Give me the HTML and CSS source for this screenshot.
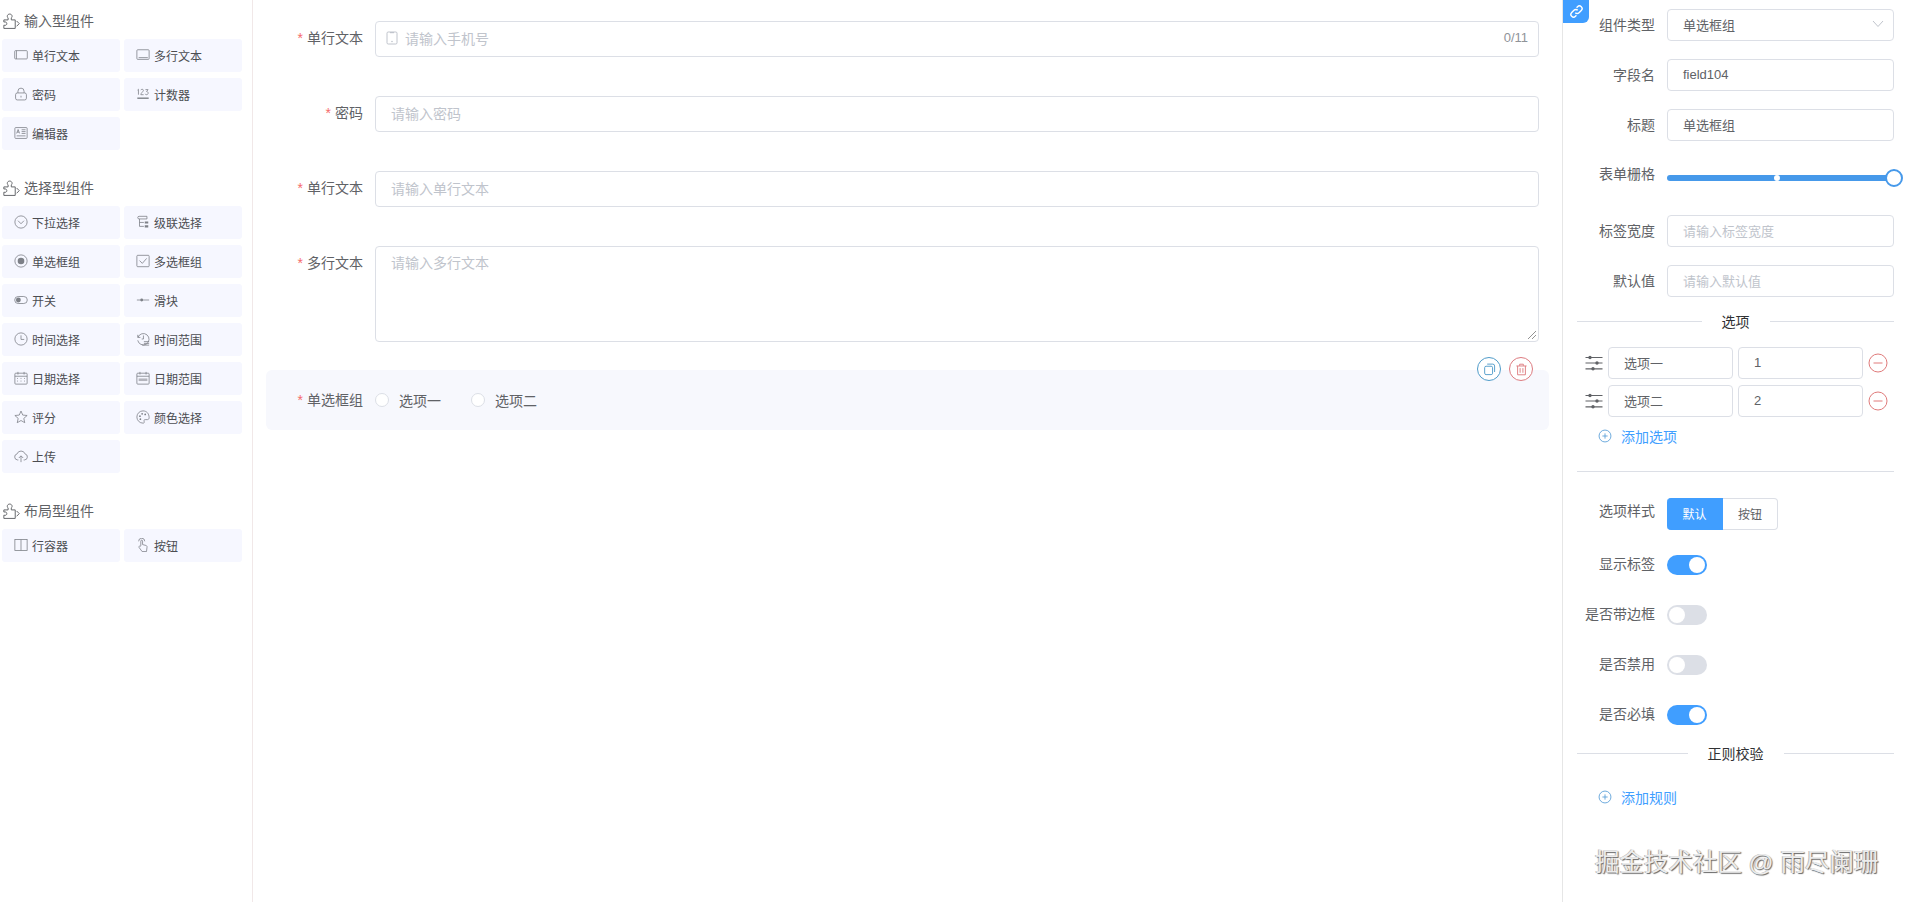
FILE: index.html
```html
<!DOCTYPE html>
<html lang="zh-CN">
<head>
<meta charset="utf-8">
<title>表单设计器</title>
<link rel="stylesheet" href="styles.css">
</head>
<body>
<svg class="defs" width="0" height="0" aria-hidden="true">
  <defs>
    <symbol id="puzzle" viewBox="0 0 16 16"><path d="M.8 6.500H4.800V4.600C3.500 3.900 3.800 1 6.300 1S9.100 3.900 7.800 4.600V6.500h3.700v8H.8v-3C2.800 12 3.600 11 3.600 10S2.800 8 .8 8.500z"/><path d="M12.800 7.500l2.500 2.500-2.500 2.500"/></symbol>
    <symbol id="rect" viewBox="0 0 16 16"><rect x=".8" y="3" width="14.400" height="9.500" rx="1"/><path d="M2.800 3v9.500"/></symbol>
    <symbol id="area" viewBox="0 0 16 16"><rect x="1" y="2" width="14" height="11" rx="1"/><path d="M3 11h10.500"/></symbol>
    <symbol id="lock" viewBox="0 0 16 16"><rect x="1.800" y="6.800" width="12.400" height="8" rx="2"/><path d="M4.500 6.800V4.800a3.500 3.500 0 0 1 7 0v2M8 10v2"/></symbol>
    <symbol id="count" viewBox="0 0 16 16"><path d="M1.500 12.800h13" stroke-width="1.600"/><path d="M1.800 3.500l1-.9v6.200M5.500 3.600c.4-1.500 3-1.200 3 .2 0 1.300-3 3-3 5h3.200M10.800 3h3l-1.700 2.200c2.400 0 2.400 3.600-.1 3.600-.8 0-1.400-.4-1.500-1"/></symbol>
    <symbol id="editor" viewBox="0 0 16 16"><rect x="1" y="1.800" width="14" height="12.400" rx="1"/><path d="M3 8.500l1.700-4.500 1.700 4.500M3.600 7h2.200M8.700 4.300h4.500M8.700 6.400h4.500M8.700 8.500h4.500M3 11.300h10.200"/></symbol>
    <symbol id="down" viewBox="0 0 16 16"><circle cx="8" cy="8" r="7"/><path d="M4.600 6.500L8 10l3.400-3.500"/></symbol>
    <symbol id="cascade" viewBox="0 0 16 16"><path d="M3.500 1.500h9v3h-9a1.500 1.500 0 0 1 0-3zM4 4.500v8.500h5M4 8.500h5"/><path d="M10 7.300h4v2.400h-4zM10 11.800h4v2.400h-4z" fill="currentColor" stroke="none"/></symbol>
    <symbol id="radio" viewBox="0 0 16 16"><circle cx="8" cy="8" r="7"/><circle cx="8" cy="8" r="3.800" fill="currentColor" stroke="none"/></symbol>
    <symbol id="check" viewBox="0 0 16 16"><rect x="1" y="1.500" width="14" height="13" rx="1"/><path d="M4 7.500l3.200 3.200L12.200 5"/></symbol>
    <symbol id="switch" viewBox="0 0 16 16"><rect x=".8" y="4" width="14.400" height="8" rx="4"/><circle cx="5" cy="8" r="2.800" fill="currentColor" stroke="none"/></symbol>
    <symbol id="slider" viewBox="0 0 16 16"><path d="M1 8h14"/><circle cx="6.500" cy="8" r="1.600" fill="currentColor" stroke="none"/></symbol>
    <symbol id="clock" viewBox="0 0 16 16"><circle cx="8" cy="8" r="7"/><path d="M8 3.800V8.500h3.700"/></symbol>
    <symbol id="clock2" viewBox="0 0 16 16"><path d="M2 3.200v3h3M2.300 6A6.500 6.500 0 1 1 2 9.500"/><path d="M8.500 4v4h-2M9 11h6M9 13h6M7 15h8"/></symbol>
    <symbol id="cal" viewBox="0 0 16 16"><rect x="1" y="2.500" width="14" height="12.500" rx="1"/><path d="M1 6h14M4.500 1v3M11.500 1v3"/><path d="M3.500 8.500h1M7.500 8.500h1M11.500 8.500h1M3.500 11.500h1M7.500 11.500h1M11.500 11.500h1"/></symbol>
    <symbol id="cal2" viewBox="0 0 16 16"><rect x="1" y="2.500" width="14" height="12.500" rx="1"/><path d="M1 6h14M4.500 1v3M11.500 1v3"/><path d="M3 8.500h10v3H3z" fill="currentColor" stroke="none" opacity=".55"/></symbol>
    <symbol id="star" viewBox="0 0 16 16"><path d="M8 1.200l2 4.600 5 .5-3.800 3.300 1.100 4.900L8 12l-4.300 2.500 1.100-4.900L1 6.300l5-.5z"/></symbol>
    <symbol id="palette" viewBox="0 0 16 16"><path d="M8 1a7 7 0 1 0 0 14c1.500 0 1.800-1 1.300-1.900-.6-1 0-2.100 1.200-2.100H13c1.300 0 2-.9 2-2.200C15 4 12 1 8 1z"/><circle cx="4.500" cy="7" r="1" fill="currentColor" stroke="none"/><circle cx="7" cy="4.300" r="1" fill="currentColor" stroke="none"/><circle cx="10.500" cy="5" r="1" fill="currentColor" stroke="none"/><circle cx="5" cy="10.500" r="1" fill="currentColor" stroke="none"/></symbol>
    <symbol id="upload" viewBox="0 0 16 16"><path d="M5 12.500H4A3.500 3.500 0 0 1 3.500 5.600 4.800 4.800 0 0 1 12.600 5.600 3.500 3.500 0 0 1 12 12.500h-1"/><path d="M8 15V8M5.500 10.300L8 7.800l2.500 2.500"/></symbol>
    <symbol id="cols" viewBox="0 0 16 16"><rect x="1" y="1.800" width="14" height="12.400"/><path d="M8 1.800v12.400"/></symbol>
    <symbol id="hand" viewBox="0 0 16 16"><path d="M5.500 9V3.500c0-1.400 2-1.400 2 0v4l3.800 1c1 .3 1.500 1 1.300 2l-.6 5H7L3.500 10.800c-.7-.9.500-2.100 1.300-1.300z"/><path d="M3 3.800a3.500 3.500 0 0 1 7 0"/></symbol>
    <symbol id="plus" viewBox="0 0 16 16"><circle cx="8" cy="8" r="6.800"/><path d="M8 5v6M5 8h6"/></symbol>
    <symbol id="drag" viewBox="0 0 18 16"><path d="M.5 2.500h17M.5 8h17M.5 13.800h17"/><circle cx="5" cy="2.500" r="1.700" fill="currentColor" stroke="none"/><circle cx="12" cy="8" r="1.700" fill="currentColor" stroke="none"/><circle cx="8" cy="13.800" r="1.700" fill="currentColor" stroke="none"/></symbol>
  </defs>
</svg>

<div class="app">
  <aside class="left">
    <section class="group">
      <h3 class="group-title"><svg class="ic-title"><use href="#puzzle"/></svg>输入型组件</h3>
      <div class="items">
        <div class="item"><svg class="ic"><use href="#rect"/></svg>单行文本</div>
        <div class="item"><svg class="ic"><use href="#area"/></svg>多行文本</div>
        <div class="item"><svg class="ic"><use href="#lock"/></svg>密码</div>
        <div class="item"><svg class="ic"><use href="#count"/></svg>计数器</div>
        <div class="item"><svg class="ic"><use href="#editor"/></svg>编辑器</div>
      </div>
    </section>
    <section class="group">
      <h3 class="group-title"><svg class="ic-title"><use href="#puzzle"/></svg>选择型组件</h3>
      <div class="items">
        <div class="item"><svg class="ic"><use href="#down"/></svg>下拉选择</div>
        <div class="item"><svg class="ic"><use href="#cascade"/></svg>级联选择</div>
        <div class="item"><svg class="ic"><use href="#radio"/></svg>单选框组</div>
        <div class="item"><svg class="ic"><use href="#check"/></svg>多选框组</div>
        <div class="item"><svg class="ic"><use href="#switch"/></svg>开关</div>
        <div class="item"><svg class="ic"><use href="#slider"/></svg>滑块</div>
        <div class="item"><svg class="ic"><use href="#clock"/></svg>时间选择</div>
        <div class="item"><svg class="ic"><use href="#clock2"/></svg>时间范围</div>
        <div class="item"><svg class="ic"><use href="#cal"/></svg>日期选择</div>
        <div class="item"><svg class="ic"><use href="#cal2"/></svg>日期范围</div>
        <div class="item"><svg class="ic"><use href="#star"/></svg>评分</div>
        <div class="item"><svg class="ic"><use href="#palette"/></svg>颜色选择</div>
        <div class="item"><svg class="ic"><use href="#upload"/></svg>上传</div>
      </div>
    </section>
    <section class="group">
      <h3 class="group-title"><svg class="ic-title"><use href="#puzzle"/></svg>布局型组件</h3>
      <div class="items">
        <div class="item"><svg class="ic"><use href="#cols"/></svg>行容器</div>
        <div class="item"><svg class="ic"><use href="#hand"/></svg>按钮</div>
      </div>
    </section>
  </aside>

  <main class="center">
    <div class="row">
      <label class="row-label"><span class="req">*</span>单行文本</label>
      <div class="field">
        <svg class="phone" viewBox="0 0 12 14"><rect x="1" y="1" width="10" height="12" rx="1.200"/><path d="M4 1h4v1.200H4z" fill="currentColor" stroke="none"/><circle cx="6" cy="10.500" r=".8" fill="currentColor" stroke="none"/></svg>
        <span class="ph grow">请输入手机号</span>
        <span class="count">0/11</span>
      </div>
    </div>
    <div class="row">
      <label class="row-label"><span class="req">*</span>密码</label>
      <div class="field pad"><span class="ph">请输入密码</span></div>
    </div>
    <div class="row">
      <label class="row-label"><span class="req">*</span>单行文本</label>
      <div class="field pad"><span class="ph">请输入单行文本</span></div>
    </div>
    <div class="row row-area">
      <label class="row-label"><span class="req">*</span>多行文本</label>
      <div class="field pad area">
        <span class="ph">请输入多行文本</span>
        <svg class="grip" viewBox="0 0 10 10"><path d="M1 9l8-8M5 9l4-4"/></svg>
      </div>
    </div>
    <div class="row row-active">
      <label class="row-label"><span class="req">*</span>单选框组</label>
      <div class="radios">
        <span class="radio"><i class="dot"></i>选项一</span>
        <span class="radio"><i class="dot"></i>选项二</span>
      </div>
      <div class="tools">
        <span class="tool tool-copy"><svg viewBox="0 0 14 14"><path d="M4.500 1.200h6a2 2 0 0 1 2 2v6.500"/><rect x="1.800" y="3.500" width="8.500" height="9" rx="1.500"/></svg></span>
        <span class="tool tool-del"><svg viewBox="0 0 14 14"><path d="M1.500 3.200h11M5 3V1.300h4V3M2.800 3.200v9.500h8.400V3.200M5.500 5.500v5M8.500 5.500v5"/></svg></span>
      </div>
    </div>
  </main>

  <aside class="right">
    <span class="link-tag"><svg viewBox="0 0 16 16"><path d="M6.700 9.300a2.800 2.800 0 0 0 4 0l2.400-2.400a2.800 2.800 0 0 0-4-4l-1 1"/><path d="M9.300 6.700a2.800 2.800 0 0 0-4 0L2.900 9.100a2.800 2.800 0 0 0 4 4l1-1"/></svg></span>

    <div class="prop"><label class="prop-label">组件类型</label><div class="box grow val">单选框组<svg class="chev" viewBox="0 0 12 8"><path d="M1 1l5 5.500L11 1"/></svg></div></div>
    <div class="prop"><label class="prop-label">字段名</label><div class="box grow val">field104</div></div>
    <div class="prop"><label class="prop-label">标题</label><div class="box grow val">单选框组</div></div>
    <div class="prop prop-slider"><label class="prop-label">表单栅格</label>
      <div class="slider"><i class="slider-stop"></i><i class="slider-thumb"></i></div>
    </div>
    <div class="prop"><label class="prop-label">标签宽度</label><div class="box grow ph-s">请输入标签宽度</div></div>
    <div class="prop"><label class="prop-label">默认值</label><div class="box grow ph-s">请输入默认值</div></div>

    <div class="divider"><span class="divider-text">选项</span></div>

    <div class="options">
      <div class="opt">
        <svg class="drag"><use href="#drag"/></svg>
        <div class="box opt-input val">选项一</div>
        <div class="box opt-input val">1</div>
        <svg class="minus" viewBox="0 0 20 20"><circle cx="10" cy="10" r="9"/><path d="M5.500 10h9"/></svg>
      </div>
      <div class="opt">
        <svg class="drag"><use href="#drag"/></svg>
        <div class="box opt-input val">选项二</div>
        <div class="box opt-input val">2</div>
        <svg class="minus" viewBox="0 0 20 20"><circle cx="10" cy="10" r="9"/><path d="M5.500 10h9"/></svg>
      </div>
    </div>
    <div class="add add-opt"><svg class="ic-add"><use href="#plus"/></svg>添加选项</div>
    <div class="rule"></div>

    <div class="prop prop-style"><label class="prop-label">选项样式</label>
      <div class="seg"><span class="seg-btn seg-on">默认</span><span class="seg-btn">按钮</span></div>
    </div>
    <div class="prop prop-sw"><label class="prop-label">显示标签</label><span class="sw on"></span></div>
    <div class="prop prop-sw"><label class="prop-label">是否带边框</label><span class="sw"></span></div>
    <div class="prop prop-sw"><label class="prop-label">是否禁用</label><span class="sw"></span></div>
    <div class="prop prop-sw"><label class="prop-label">是否必填</label><span class="sw on"></span></div>

    <div class="divider divider-2"><span class="divider-text">正则校验</span></div>
    <div class="add add-rule"><svg class="ic-add"><use href="#plus"/></svg>添加规则</div>
  </aside>
</div>
<div class="watermark">掘金技术社区 @ 雨尽阑珊</div>
</body>
</html>
```
FILE: styles.css
```css
* { box-sizing: border-box; }
html, body { margin: 0; height: 902px; overflow: hidden; }
body {
  font-family: "Liberation Sans", "Noto Sans CJK SC", sans-serif;
  color: #606266;
  background: #fff;
}
.defs { position: absolute; }
symbol, svg { fill: none; stroke: currentColor; }
.app { display: flex; height: 902px; }

/* left */
.left { width: 253px; flex: none; border-right: 1px solid #f1e8e8; padding: 11px 0 0 2px; }
.group { margin-bottom: 28px; }
.group-title {
  display: flex; align-items: center; margin: 0 0 8px; height: 20px;
  font-size: 14px; font-weight: 400; line-height: 20px; color: #606266;
}
.ic-title { width: 17px; height: 17px; margin-left: 1px; margin-right: 4px; stroke-width: .9; color: #606266; }
.items { display: grid; grid-template-columns: 118px 118px; gap: 6px 4px; }
.item {
  display: flex; align-items: center; height: 33px; padding: 0 0 1px 12px;
  background: #f6f7ff; border-radius: 3px; font-size: 12px; color: #4b4d52;
}
.ic { width: 14px; height: 14px; margin-right: 4px; stroke-width: .9; color: #7d8087; }

/* center */
.center { width: 1309px; flex: none; padding: 21px 13px 0; }
.row { display: flex; height: 36px; margin-bottom: 39px; padding-right: 10px; }
.row-label {
  width: 109px; flex: none; padding-right: 12px; text-align: right;
  font-size: 14px; line-height: 35px; color: #606266;
}
.req { color: #f56c6c; margin-right: 4px; }
.field {
  flex: 1; display: flex; align-items: center; border: 1px solid #dcdfe6;
  border-radius: 4px; font-size: 14px; padding: 0 10px 3px;
}
.pad { padding: 0 15px 3px; }
.grow { flex: 1; }
.ph { color: #c0c4cc; }
.phone { width: 12px; height: 14px; margin-right: 7px; color: #c0c4cc; stroke-width: 1; }
.count { font-size: 13px; color: #909399; }
.row-area { height: 96px; margin-bottom: 28px; }
.area { position: relative; align-items: flex-start; padding-top: 4px; line-height: 24px; }
.grip { position: absolute; right: 1px; bottom: 1px; width: 10px; height: 10px; color: #777; stroke-width: .8; }
.row-active {
  position: relative; height: 60px; background: #f7f8fd; border-radius: 6px;
  align-items: center;
}
.row-active .row-label { line-height: 60px; }
.radios { display: flex; }
.radio { display: flex; align-items: center; width: 96px; font-size: 14px; }
.dot {
  width: 14px; height: 14px; border: 1px solid #dcdfe6; border-radius: 50%;
  background: #fff; margin-right: 10px;
}
.tools { position: absolute; right: 16px; top: -13px; display: flex; gap: 8px; }
.tool {
  width: 24px; height: 24px; border-radius: 50%; background: #fff;
  border: 1px solid; display: flex; align-items: center; justify-content: center;
}
.tool svg { width: 13px; height: 13px; stroke-width: 1; }
.tool-copy { color: #4f9bc9; }
.tool-del { color: #dd7b80; }

/* right */
.right { position: relative; flex: 1; border-left: 1px solid #e6e6e6; padding: 9px 11px 0 14px; }
.link-tag {
  position: absolute; left: 0; top: 0; width: 26px; height: 23px; background: #409eff;
  border-bottom-right-radius: 6px; display: flex; align-items: center; justify-content: center;
}
.link-tag svg { width: 15px; height: 15px; color: #fff; stroke-width: 1.500; }
.prop { display: flex; align-items: center; height: 32px; margin-bottom: 18px; }
.prop-label { width: 78px; flex: none; margin-right: 12px; padding-bottom: 2px; text-align: right; font-size: 14px; color: #606266; white-space: nowrap; }
.box {
  display: flex; align-items: center; height: 32px; border: 1px solid #dcdfe6;
  border-radius: 4px; padding: 0 15px 2px; font-size: 13px;
}
.val { color: #606266; }
.ph-s { color: #c0c4cc; }
.chev { width: 12px; height: 8px; margin-left: auto; margin-right: -6px; color: #c0c4cc; stroke-width: 1; }
.prop-slider { margin-bottom: 24px; }
.prop-slider .prop-label { margin-top: -3px; }
.slider { position: relative; flex: 1; height: 6px; background: #4699ea; border-radius: 3px; margin-top: 5px; }
.slider-stop { position: absolute; left: 107px; top: 0; width: 6px; height: 6px; border-radius: 50%; background: #fff; }
.slider-thumb {
  position: absolute; right: -9px; top: -6px; width: 18px; height: 18px; border-radius: 50%;
  background: #fff; border: 2px solid #4699ea;
}
.divider { display: flex; align-items: center; height: 20px; margin: -4px 0 16px; font-size: 14px; color: #303133; }
.divider::before, .divider::after { content: ""; flex: 1; height: 1px; background: #dcdfe6; }
.divider-text { padding: 0 20px 1px; }
.options { display: flex; flex-direction: column; gap: 6px; }
.opt { display: flex; align-items: center; }
.drag { width: 18px; height: 16px; margin: 0 5px 0 8px; color: #606266; stroke-width: 1.200; }
.opt-input { width: 125px; margin-right: 5px; }
.minus { width: 20px; height: 20px; color: #e07b7b; stroke-width: 1; }
.add { display: flex; align-items: center; height: 20px; padding: 0 0 2px 21px; font-size: 14px; color: #409eff; }
.add-opt { margin-top: 10px; }
.ic-add { width: 14px; height: 14px; margin-right: 9px; color: #5a9fd8; stroke-width: 1; }
.rule { height: 1px; background: #dcdfe6; margin: 24px 0 26px; }
.prop-style { margin-bottom: 25px; }
.prop-style .prop-label { margin-top: -6px; }
.seg { display: flex; }
.seg-btn {
  width: 55px; height: 32px; display: flex; align-items: center; justify-content: center;
  font-size: 12px; padding-bottom: 2px; border: 1px solid #dcdfe6; border-left: 0; color: #606266;
  border-radius: 0 4px 4px 0;
}
.seg-on { width: 56px; background: #409eff; border-color: #409eff; color: #fff; border-radius: 4px 0 0 4px; }
.prop-sw { height: 20px; margin-bottom: 30px; }
.prop-sw .prop-label { padding-bottom: 4px; }
.sw { position: relative; width: 40px; height: 20px; border-radius: 10px; background: #dcdfe6; }
.sw::after {
  content: ""; position: absolute; left: 2px; top: 2px; width: 16px; height: 16px;
  border-radius: 50%; background: #fff;
}
.sw.on { background: #409eff; }
.sw.on::after { left: 22px; }
.divider-2 { margin: -12px 0 25px; }
.watermark {
  position: absolute; left: 1595px; top: 846px; font-size: 24.500px; line-height: 34px;
  color: #ececec; text-shadow: 1px 1px 1px #666, -1px 0 0 #bbb; white-space: nowrap;
}
```
